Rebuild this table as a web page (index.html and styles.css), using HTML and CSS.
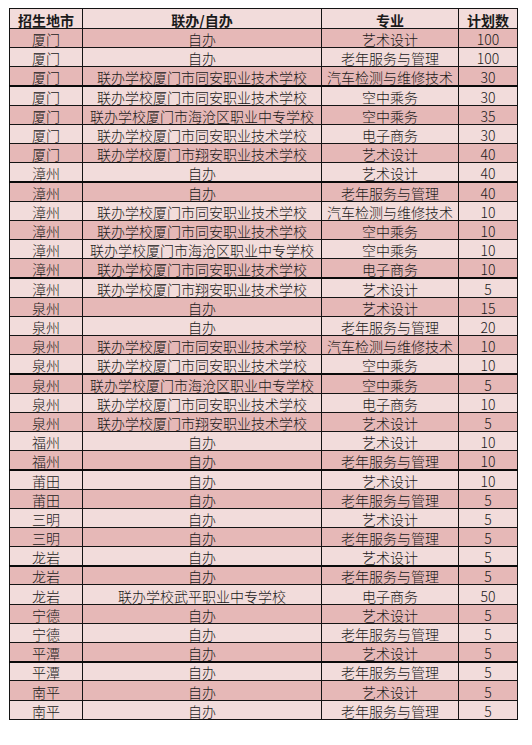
FILE: index.html
```html
<!DOCTYPE html>
<html lang="zh-CN">
<head>
<meta charset="utf-8">
<title>招生计划</title>
<link rel="stylesheet" href="styles.css">
</head>
<body>
<table class="plan">
<colgroup><col class="c-city"><col class="c-mode"><col class="c-major"><col class="c-num"></colgroup>
<thead>
<tr class="head"><th>招生地市</th><th>联办/自办</th><th>专业</th><th>计划数</th></tr>
</thead>
<tbody>
<tr class="dk"><td>厦门</td><td>自办</td><td>艺术设计</td><td>100</td></tr>
<tr class="lt"><td>厦门</td><td>自办</td><td>老年服务与管理</td><td>100</td></tr>
<tr class="dk"><td>厦门</td><td>联办学校厦门市同安职业技术学校</td><td>汽车检测与维修技术</td><td>30</td></tr>
<tr class="lt sep"><td>厦门</td><td>联办学校厦门市同安职业技术学校</td><td>空中乘务</td><td>30</td></tr>
<tr class="dk"><td>厦门</td><td>联办学校厦门市海沧区职业中专学校</td><td>空中乘务</td><td>35</td></tr>
<tr class="lt"><td>厦门</td><td>联办学校厦门市同安职业技术学校</td><td>电子商务</td><td>30</td></tr>
<tr class="dk"><td>厦门</td><td>联办学校厦门市翔安职业技术学校</td><td>艺术设计</td><td>40</td></tr>
<tr class="lt"><td>漳州</td><td>自办</td><td>艺术设计</td><td>40</td></tr>
<tr class="dk sep"><td>漳州</td><td>自办</td><td>老年服务与管理</td><td>40</td></tr>
<tr class="lt"><td>漳州</td><td>联办学校厦门市同安职业技术学校</td><td>汽车检测与维修技术</td><td>10</td></tr>
<tr class="dk"><td>漳州</td><td>联办学校厦门市同安职业技术学校</td><td>空中乘务</td><td>10</td></tr>
<tr class="lt"><td>漳州</td><td>联办学校厦门市海沧区职业中专学校</td><td>空中乘务</td><td>10</td></tr>
<tr class="dk"><td>漳州</td><td>联办学校厦门市同安职业技术学校</td><td>电子商务</td><td>10</td></tr>
<tr class="lt sep"><td>漳州</td><td>联办学校厦门市翔安职业技术学校</td><td>艺术设计</td><td>5</td></tr>
<tr class="dk"><td>泉州</td><td>自办</td><td>艺术设计</td><td>15</td></tr>
<tr class="lt"><td>泉州</td><td>自办</td><td>老年服务与管理</td><td>20</td></tr>
<tr class="dk"><td>泉州</td><td>联办学校厦门市同安职业技术学校</td><td>汽车检测与维修技术</td><td>10</td></tr>
<tr class="lt"><td>泉州</td><td>联办学校厦门市同安职业技术学校</td><td>空中乘务</td><td>10</td></tr>
<tr class="dk sep"><td>泉州</td><td>联办学校厦门市海沧区职业中专学校</td><td>空中乘务</td><td>5</td></tr>
<tr class="lt"><td>泉州</td><td>联办学校厦门市同安职业技术学校</td><td>电子商务</td><td>10</td></tr>
<tr class="dk"><td>泉州</td><td>联办学校厦门市翔安职业技术学校</td><td>艺术设计</td><td>5</td></tr>
<tr class="lt"><td>福州</td><td>自办</td><td>艺术设计</td><td>10</td></tr>
<tr class="dk"><td>福州</td><td>自办</td><td>老年服务与管理</td><td>10</td></tr>
<tr class="lt sep"><td>莆田</td><td>自办</td><td>艺术设计</td><td>10</td></tr>
<tr class="dk"><td>莆田</td><td>自办</td><td>老年服务与管理</td><td>5</td></tr>
<tr class="lt"><td>三明</td><td>自办</td><td>艺术设计</td><td>5</td></tr>
<tr class="dk"><td>三明</td><td>自办</td><td>老年服务与管理</td><td>5</td></tr>
<tr class="lt"><td>龙岩</td><td>自办</td><td>艺术设计</td><td>5</td></tr>
<tr class="dk sep"><td>龙岩</td><td>自办</td><td>老年服务与管理</td><td>5</td></tr>
<tr class="lt"><td>龙岩</td><td>联办学校武平职业中专学校</td><td>电子商务</td><td>50</td></tr>
<tr class="dk"><td>宁德</td><td>自办</td><td>艺术设计</td><td>5</td></tr>
<tr class="lt"><td>宁德</td><td>自办</td><td>老年服务与管理</td><td>5</td></tr>
<tr class="dk"><td>平潭</td><td>自办</td><td>艺术设计</td><td>5</td></tr>
<tr class="lt sep"><td>平潭</td><td>自办</td><td>老年服务与管理</td><td>5</td></tr>
<tr class="dk"><td>南平</td><td>自办</td><td>艺术设计</td><td>5</td></tr>
<tr class="lt"><td>南平</td><td>自办</td><td>老年服务与管理</td><td>5</td></tr>
</tbody>
</table>
</body>
</html>
```
FILE: styles.css
```css
html, body {
  margin: 0;
  padding: 0;
  background: #ffffff;
}
body {
  padding: 8px 0 0 9px;
  font-family: "Noto Sans CJK SC", "Noto Sans", sans-serif;
  color: #1a1a1a;
}
.plan {
  border-collapse: collapse;
  table-layout: fixed;
  width: 508px;
  font-size: 14px;
}
.c-city { width: 73px; }
.c-mode { width: 239px; }
.c-major { width: 137px; }
.c-num { width: 59px; }
.plan th, .plan td {
  border: 1px solid #141414;
  padding: 0;
  text-align: center;
  vertical-align: bottom;
  line-height: 16px;
  font-weight: 300;
  white-space: nowrap;
  overflow: hidden;
}
.head {
  height: 20px;
  background: #f2dcdb;
}
.plan .head th {
  font-weight: 700;
  font-size: 14px;
}
tbody tr {
  height: 19.2px;
}
.dk { background: #e6b8b7; }
.lt { background: #f2dcdb; }
.sep td { border-top: 2px solid #0a0a0a; }
```
